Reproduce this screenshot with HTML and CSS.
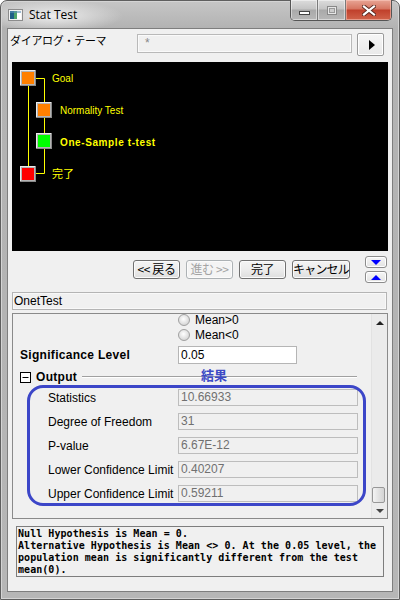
FILE: index.html
```html
<!DOCTYPE html>
<html lang="ja">
<head>
<meta charset="utf-8">
<title>Stat Test</title>
<link rel="stylesheet" href="styles.css">
</head>
<body>
<div class="window">
  <div class="titlebar">
    <svg class="app-icon" width="15" height="12" viewBox="0 0 15 12">
      <rect x="0.5" y="0.5" width="14" height="11" fill="#f2f2f2" stroke="#8c8c8c"/>
      <rect x="2" y="2" width="4" height="8" fill="#1f5f86"/>
      <rect x="6" y="2" width="3" height="8" fill="#4fa46c"/>
      <rect x="9" y="2" width="4" height="8" fill="#ffffff"/>
      <rect x="2" y="2" width="11" height="2" fill="#5b8fb5" opacity="0.6"/>
    </svg>
    <span class="title">Stat Test</span>
    <div class="caption-btns">
      <div class="cap-btn cap-min"><span class="min-glyph"></span></div>
      <div class="cap-btn cap-max"><span class="max-glyph"></span></div>
      <div class="cap-btn cap-close">
        <svg width="14" height="11" viewBox="0 0 14 11">
          <path d="M2 1.5 L12 9.5 M12 1.5 L2 9.5" stroke="#5a2a22" stroke-width="4" stroke-linecap="square"/>
          <path d="M2 1.5 L12 9.5 M12 1.5 L2 9.5" stroke="#ffffff" stroke-width="2.2" stroke-linecap="square"/>
        </svg>
      </div>
    </div>
  </div>

  <div class="client">
    <div class="theme-row">
      <span class="theme-label">ダイアログ・テーマ</span>
      <div class="combo">*</div>
      <div class="arrow-btn"><span class="play"></span></div>
    </div>

    <div class="flow-panel">
      <svg class="flow-svg" width="376" height="189" viewBox="0 0 376 189">
        <g stroke="#ffff00" stroke-width="1" fill="none">
          <path d="M16.5 24 V104"/>
          <path d="M24 16.5 H32.5 V40"/>
          <path d="M32.5 56 V71"/>
          <path d="M32.5 87 V111.5 H24"/>
        </g>
        <g>
          <rect x="8" y="8" width="16" height="16" fill="#8a8a8a"/>
          <rect x="8" y="8" width="15" height="15" fill="#ececec"/>
          <rect x="9" y="9" width="14" height="14" fill="#b4b4b4"/>
          <rect x="10" y="10" width="12" height="12" fill="#ff8000"/>
        </g>
        <g>
          <rect x="24" y="40" width="16" height="16" fill="#8a8a8a"/>
          <rect x="24" y="40" width="15" height="15" fill="#ececec"/>
          <rect x="25" y="41" width="14" height="14" fill="#b4b4b4"/>
          <rect x="26" y="42" width="12" height="12" fill="#ff8000"/>
        </g>
        <g>
          <rect x="24" y="71" width="16" height="16" fill="#8a8a8a"/>
          <rect x="24" y="71" width="15" height="15" fill="#ececec"/>
          <rect x="25" y="72" width="14" height="14" fill="#b4b4b4"/>
          <rect x="26" y="73" width="12" height="12" fill="#00ff00"/>
        </g>
        <g>
          <rect x="8" y="104" width="16" height="16" fill="#8a8a8a"/>
          <rect x="8" y="104" width="15" height="15" fill="#ececec"/>
          <rect x="9" y="105" width="14" height="14" fill="#b4b4b4"/>
          <rect x="10" y="106" width="12" height="12" fill="#ff0000"/>
        </g>
        <text class="node-text" x="40" y="20">Goal</text>
        <text class="node-text" x="48" y="52">Normality Test</text>
        <text class="node-text node-bold" x="48" y="84">One-Sample t-test</text>
        <text class="node-text node-jp" x="40" y="116">完了</text>
      </svg>
    </div>

    <div class="nav-row">
      <div class="btn btn-back">&lt;&lt; 戻る</div>
      <div class="btn btn-disabled">進む &gt;&gt;</div>
      <div class="btn">完了</div>
      <div class="btn btn-wide">キャンセル</div>
      <div class="updown">
        <div class="small-btn"><span class="tri-down"></span></div>
        <div class="small-btn"><span class="tri-up"></span></div>
      </div>
    </div>

    <div class="name-field">OnetTest</div>

    <div class="props">
      <div class="props-content">
        <div class="radio-row first"><span class="radio"></span><span>Mean&gt;0</span></div>
        <div class="radio-row"><span class="radio"></span><span>Mean&lt;0</span></div>
        <div class="sig-row">
          <span class="sig-label">Significance Level</span>
          <div class="sig-input">0.05</div>
        </div>
        <div class="out-head">
          <svg class="collapse" width="11" height="11" viewBox="0 0 11 11">
            <rect x="0.5" y="0.5" width="10" height="10" fill="#fff" stroke="#000"/>
            <path d="M2.5 5.5 H8.5" stroke="#000"/>
          </svg>
          <span class="out-title">Output</span>
          <span class="head-line"></span>
        </div>
        <div class="out-rows">
          <div class="out-row"><span class="out-label">Statistics</span><div class="out-input">10.66933</div></div>
          <div class="out-row"><span class="out-label">Degree of Freedom</span><div class="out-input">31</div></div>
          <div class="out-row"><span class="out-label">P-value</span><div class="out-input">6.67E-12</div></div>
          <div class="out-row"><span class="out-label">Lower Confidence Limit</span><div class="out-input">0.40207</div></div>
          <div class="out-row"><span class="out-label">Upper Confidence Limit</span><div class="out-input">0.59211</div></div>
        </div>
        <div class="anno-label">結果</div>
        <div class="anno-rect"></div>
      </div>
      <div class="scrollbar">
        <div class="sb-arrow"><span class="sb-up"></span></div>
        <div class="sb-track"><div class="sb-thumb"></div></div>
        <div class="sb-arrow sb-arrow-bottom"><span class="sb-down"></span></div>
      </div>
    </div>

    <div class="hypo">
      <div class="hl">Null Hypothesis is Mean = 0.</div>
      <div class="hl">Alternative Hypothesis is Mean &lt;&gt; 0. At the 0.05 level, the</div>
      <div class="hl">population mean is significantly different from the test</div>
      <div class="hl">mean(0).</div>
    </div>
  </div>
</div>
</body>
</html>
```

FILE: styles.css
```css
* { box-sizing: border-box; }
html, body { margin: 0; padding: 0; }
body {
  width: 400px;
  height: 600px;
  overflow: hidden;
  background: #ffffff;
  font-family: "Liberation Sans", "Noto Sans CJK JP", sans-serif;
  font-size: 12px;
  color: #000;
}

.window {
  width: 400px;
  height: 600px;
  border: 1px solid #5f5f5f;
  border-radius: 7px 7px 0 0;
  padding: 0 6px 7px;
  background:
    radial-gradient(ellipse 70px 16px at 52px 15px, rgba(240,240,240,0.95), rgba(240,240,240,0) 100%),
    linear-gradient(#c6c6c6 0, #b2b2b2 28px, #b6b6b6 100%);
  box-shadow: inset 0 0 0 1px #d4d4d4;
}

/* title bar */
.titlebar {
  height: 27px;
  display: flex;
  align-items: flex-start;
}
.app-icon { margin: 8px 0 0 1px; flex: none; }
.title {
  margin: 6px 0 0 6px;
  font-family: "Open Sans", "Noto Sans", sans-serif;
  font-size: 12px;
  line-height: 16px;
  color: #000;
}
.caption-btns {
  margin-left: auto;
  margin-right: 1px;
  margin-top: -1px;
  display: flex;
  height: 21px;
  border: 1px solid #555;
  border-top: none;
  border-radius: 0 0 5px 5px;
  overflow: hidden;
}
.cap-btn {
  height: 20px;
  display: flex;
  align-items: center;
  justify-content: center;
}
.cap-min, .cap-max {
  width: 27px;
  background: linear-gradient(#dcdcdc 0, #c4c4c4 45%, #a9a9a9 50%, #b8b8b8 100%);
  border-right: 1px solid #7a7a7a;
  box-shadow: inset 0 0 0 1px rgba(255,255,255,0.45);
}
.cap-max { width: 28px; }
.cap-close {
  width: 45px;
  background: linear-gradient(#e8a595 0, #d67561 45%, #c0402b 50%, #d0634a 100%);
  box-shadow: inset 0 0 0 1px rgba(255,210,200,0.5);
}
.min-glyph {
  width: 11px;
  height: 4px;
  margin-top: 6px;
  background: #fff;
  border: 1px solid #444;
}
.max-glyph {
  width: 10px;
  height: 9px;
  border: 1px solid #888;
  box-shadow: inset 0 0 0 1px #e6e6e6, inset 0 0 0 2px #999;
  background: #ccc;
}

/* client */
.client {
  width: 386px;
  height: 564px;
  border: 1px solid #7e7e7e;
  background: #f0f0f0;
  display: flex;
  flex-direction: column;
}

.theme-row {
  height: 33px;
  display: flex;
  align-items: flex-start;
  padding: 4px 0 0 2px;
  flex: none;
}
.theme-label {
  width: 127px;
  font-family: "Noto Sans CJK JP", sans-serif;
  font-size: 11px;
  line-height: 14px;
  letter-spacing: -0.3px;
}
.combo {
  width: 215px;
  height: 19px;
  margin-top: 1px;
  border: 1px solid #b9b9b9;
  box-shadow: inset 0 0 0 1px #fafafa;
  background: #f0f0f0;
  color: #888;
  font-family: "Liberation Sans", sans-serif;
  font-size: 12px;
  line-height: 17px;
  padding-left: 7px;
}
.arrow-btn {
  width: 27px;
  height: 23px;
  margin-left: 5px;
  border: 1px solid #9a9a9a;
  border-radius: 2px;
  background: linear-gradient(#f6f6f6, #e9e9e9);
  box-shadow: inset 0 0 0 1px #fff;
  display: flex;
  align-items: center;
  justify-content: center;
}
.play {
  width: 0;
  height: 0;
  border-left: 6px solid #000;
  border-top: 5px solid transparent;
  border-bottom: 5px solid transparent;
  margin-left: 2px;
}

/* flow diagram */
.flow-panel {
  height: 189px;
  margin: 0 4px;
  background: #000;
  flex: none;
}
.flow-svg { display: block; }
.node-text {
  fill: #ffff00;
  font-family: "Liberation Sans", sans-serif;
  font-size: 10px;
}
.node-bold { font-weight: bold; letter-spacing: 0.6px; }
.node-jp { font-family: "Noto Sans CJK JP", sans-serif; font-size: 11px; }

/* nav row */
.nav-row {
  height: 41px;
  display: flex;
  align-items: flex-start;
  padding-left: 125px;
  flex: none;
}
.btn {
  width: 47px;
  height: 19px;
  margin-top: 9px;
  margin-right: 6px;
  border: 1px solid #707070;
  border-radius: 3px;
  background: linear-gradient(#f4f4f4 0, #ececec 50%, #dedede 100%);
  box-shadow: inset 0 0 0 1px #fbfbfb;
  font-family: "Noto Sans CJK JP", sans-serif;
  font-size: 12px;
  line-height: 16px;
  text-align: center;
  white-space: nowrap;
  letter-spacing: -0.4px;
}
.btn-disabled {
  color: #a3a3a3;
  border-color: #adb2b5;
  background: #f4f4f4;
}
.btn-wide { width: 58px; margin-right: 0; letter-spacing: -0.8px; }
.updown {
  margin-left: 15px;
  margin-top: 5px;
  display: flex;
  flex-direction: column;
  gap: 3px;
}
.small-btn {
  width: 22px;
  height: 12px;
  border: 1px solid #8c8c8c;
  border-radius: 3px;
  background: linear-gradient(#f6f6f6, #e2e2e2);
  box-shadow: inset 0 0 0 1px #fff;
  display: flex;
  align-items: center;
  justify-content: center;
}
.tri-down {
  width: 0; height: 0;
  border-top: 5px solid #0000ff;
  border-left: 5px solid transparent;
  border-right: 5px solid transparent;
}
.tri-up {
  width: 0; height: 0;
  border-bottom: 5px solid #0000ff;
  border-left: 5px solid transparent;
  border-right: 5px solid transparent;
}

/* name field */
.name-field {
  height: 18px;
  margin: 0 5px 0 4px;
  border: 1px solid #b4b4b4;
  box-shadow: inset 0 0 0 1px #f8f8f8;
  background: #f0f0f0;
  font-size: 12px;
  line-height: 16px;
  padding-left: 1px;
  flex: none;
}

/* property grid */
.props {
  height: 206px;
  margin: 3px 4px 0;
  border: 1px solid #8a8a8a;
  display: flex;
  overflow: hidden;
  flex: none;
}
.props-content {
  flex: 1;
  position: relative;
  overflow: hidden;
}
.radio-row {
  height: 15px;
  display: flex;
  align-items: center;
  padding-left: 165px;
  font-size: 12px;
}
.radio-row.first { margin-top: -2px; }
.radio {
  width: 12px;
  height: 12px;
  border-radius: 50%;
  border: 1px solid #a0a0a0;
  background: radial-gradient(circle at 45% 40%, #ffffff 0, #e4e4e4 50%, #c8c8c8 100%);
  margin-right: 5px;
  flex: none;
}
.sig-row {
  height: 18px;
  margin-top: 4px;
  display: flex;
  align-items: center;
}
.sig-label {
  width: 165px;
  padding-left: 7px;
  font-weight: bold;
  font-size: 12px;
  letter-spacing: 0.3px;
}
.sig-input {
  width: 119px;
  height: 18px;
  border: 1px solid #b5b5b5;
  background: #fff;
  padding-left: 2px;
  line-height: 16px;
}
.out-head {
  height: 14px;
  margin-top: 6px;
  display: flex;
  align-items: center;
  padding-left: 7px;
}
.collapse { flex: none; display: block; }
.out-title {
  margin-left: 5px;
  font-weight: bold;
  font-size: 12px;
  letter-spacing: 0.3px;
}
.head-line {
  flex: 1;
  height: 2px;
  margin: 0 14px 0 5px;
  border-top: 1px solid #a0a0a0;
  border-bottom: 1px solid #ffffff;
}
.out-rows {
  margin-top: 5px;
  display: flex;
  flex-direction: column;
  gap: 7px;
}
.out-row {
  height: 17px;
  display: flex;
  align-items: center;
}
.out-label {
  width: 165px;
  padding-left: 35px;
  font-size: 12px;
  white-space: nowrap;
}
.out-input {
  width: 180px;
  height: 17px;
  border: 1px solid #bdbdbd;
  background: #f0f0f0;
  color: #707070;
  padding-left: 2px;
  line-height: 15px;
}
.anno-label {
  position: absolute;
  left: 188px;
  top: 53px;
  font-family: "Noto Sans CJK JP", sans-serif;
  font-weight: bold;
  font-size: 13px;
  line-height: 15px;
  color: #3d4bc6;
}
.anno-rect {
  position: absolute;
  left: 14px;
  top: 71px;
  width: 339px;
  height: 121px;
  border: 3px solid #3c46c8;
  border-radius: 16px;
}

/* scrollbar */
.scrollbar {
  width: 16px;
  background: #ebebeb;
  border-left: 1px solid #e2e2e2;
  display: flex;
  flex-direction: column;
  flex: none;
}
.sb-arrow {
  height: 17px;
  display: flex;
  align-items: center;
  justify-content: center;
  flex: none;
}
.sb-arrow-bottom { height: 15px; }
.sb-up {
  width: 0; height: 0;
  border-bottom: 4px solid #222;
  border-left: 4px solid transparent;
  border-right: 4px solid transparent;
}
.sb-down {
  width: 0; height: 0;
  border-top: 4px solid #444;
  border-left: 4px solid transparent;
  border-right: 4px solid transparent;
}
.sb-track {
  flex: 1;
  display: flex;
  flex-direction: column;
  justify-content: flex-end;
}
.sb-thumb {
  width: 13px;
  height: 16px;
  border: 1px solid #979797;
  border-radius: 2px;
  background: linear-gradient(90deg, #f3f3f3, #e2e2e2 50%, #d4d4d4);
}

/* hypothesis box */
.hypo {
  height: 51px;
  margin: 7px 8px 0;
  border: 1px solid #7d7d7d;
  background: #f0f0f0;
  padding: 1px 0 0 1px;
  font-family: "DejaVu Sans Mono", "Liberation Mono", monospace;
  font-weight: bold;
  font-size: 10px;
  line-height: 12px;
  flex: none;
  overflow: hidden;
}
.hl { height: 12px; white-space: nowrap; letter-spacing: 0.05px; }
```
